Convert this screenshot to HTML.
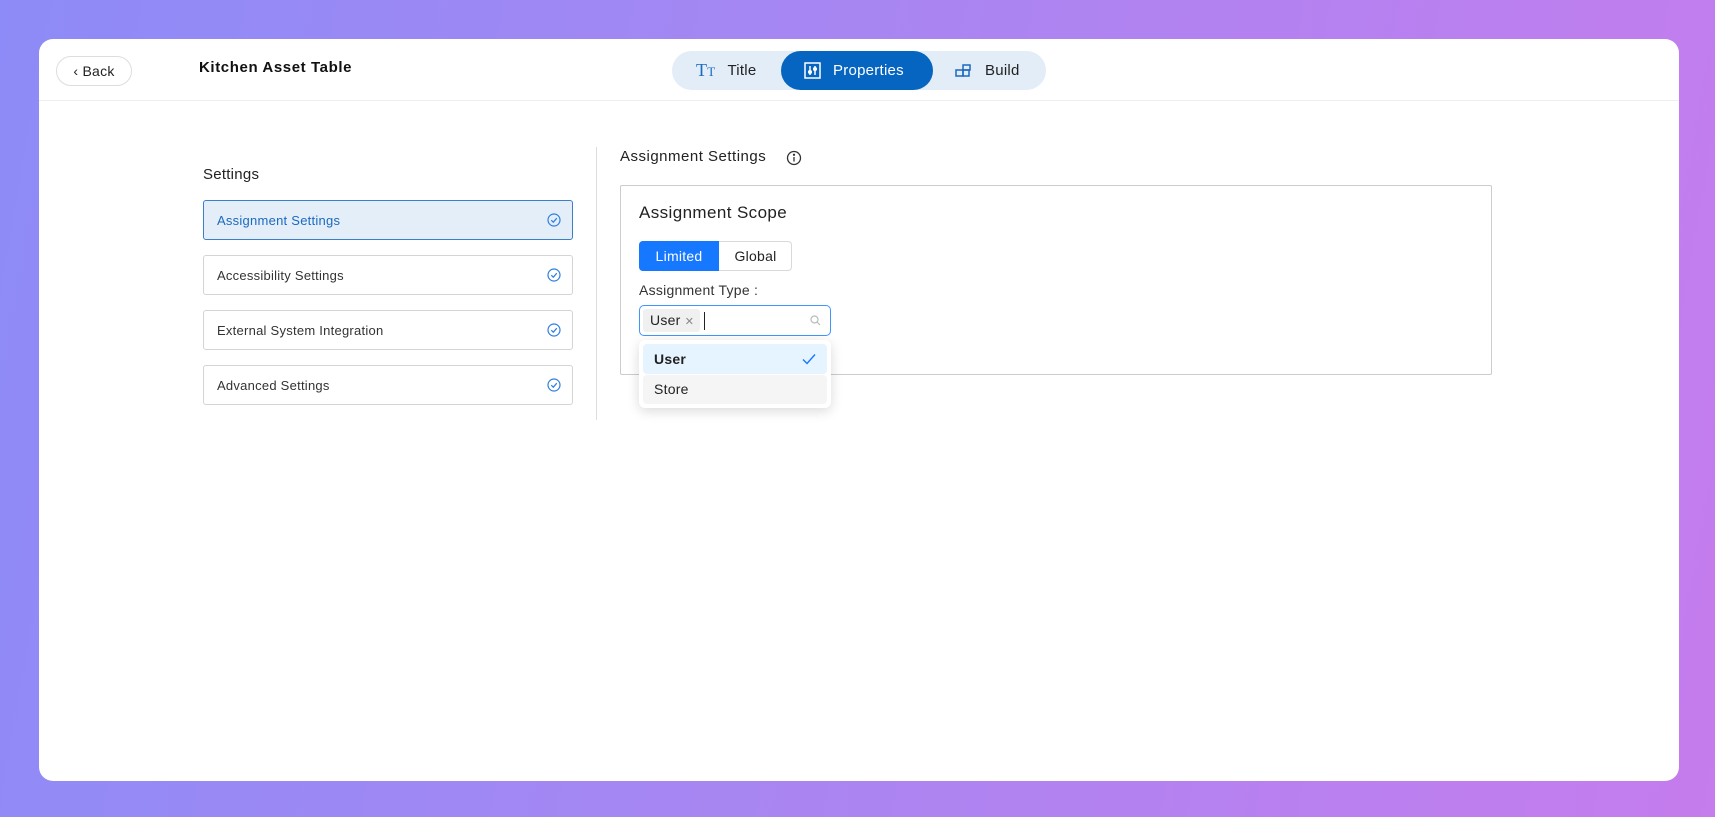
<!DOCTYPE html>
<html><head><style>
*{box-sizing:border-box;margin:0;padding:0}
body{width:1715px;height:817px;overflow:hidden;background:linear-gradient(100deg,#8d8bf7 0%,#a487f3 40%,#c57ced 100%);font-family:"Liberation Sans",sans-serif;color:#222;position:relative;letter-spacing:.25px}
.card{position:absolute;left:39px;top:39px;width:1640px;height:742px;background:#fff;border-radius:14px}
.abs{position:absolute}
.back{left:17px;top:17px;width:76px;height:30px;border:1px solid #ddd;border-radius:15px;font-size:14px;display:flex;align-items:center;justify-content:center;color:#222}
.hdr{left:0;top:61px;width:100%;height:1px;background:#eee}
.tabs{left:633px;top:12px;width:374px;height:39px;background:#e3edf8;border-radius:20px}
.tab{position:absolute;top:0;height:39px;display:flex;align-items:center;font-size:15px;gap:12px}
.item{position:absolute;left:164px;width:370px;height:40px;border:1px solid #d4d4d4;border-radius:3px;font-size:13px;display:flex;align-items:center;padding-left:13px;color:#333}
.item svg{position:absolute;right:11px;top:12px}
</style></head><body>
<div class="card">
<div class="abs back">‹ Back</div>
<div class="abs" style="left:160px;top:20px;font-size:15px;font-weight:bold;color:#111;letter-spacing:.6px">Kitchen Asset Table</div>
<div class="abs tabs">
 <div class="tab" style="left:24px;color:#222"><span style="color:#1a6ac0;font-family:'Liberation Serif',serif;font-size:18px">T<span style="font-size:13px">T</span></span>Title</div>
 <div class="tab" style="left:109px;width:152px;background:#0565c0;border-radius:20px;color:#fff;padding-left:23px">
  <svg width="17" height="17" viewBox="0 0 17 17" fill="none" stroke="#fff" stroke-width="1.5"><rect x="1" y="1" width="15" height="15"/><path d="M6 4v9M11 4v9"/><circle cx="6" cy="10" r="1.3" fill="#fff"/><circle cx="11" cy="7" r="1.3" fill="#fff"/></svg>Properties</div>
 <div class="tab" style="left:283px;color:#222"><svg width="18" height="14" viewBox="0 0 18 14" fill="none" stroke="#1a6ac0" stroke-width="1.5"><rect x="1" y="6" width="7" height="6"/><rect x="8" y="6" width="6" height="6"/><rect x="8" y="1" width="7" height="5"/></svg>Build</div>
</div>
<div class="abs hdr"></div>
<div class="abs" style="left:164px;top:127px;font-size:15px;color:#222">Settings</div>
<div class="item" style="top:161px;background:#e4eef8;border-color:#3a7fc8;color:#1a6ac0">Assignment Settings<svg width="14" height="14" viewBox="0 0 14 14" fill="none" stroke="#2e7fe0" stroke-width="1.2"><circle cx="7" cy="7" r="6"/><path d="M4.3 7.2l2 2 3.5-4"/></svg></div>
<div class="item" style="top:216px">Accessibility Settings<svg width="14" height="14" viewBox="0 0 14 14" fill="none" stroke="#2e7fe0" stroke-width="1.2"><circle cx="7" cy="7" r="6"/><path d="M4.3 7.2l2 2 3.5-4"/></svg></div>
<div class="item" style="top:271px">External System Integration<svg width="14" height="14" viewBox="0 0 14 14" fill="none" stroke="#2e7fe0" stroke-width="1.2"><circle cx="7" cy="7" r="6"/><path d="M4.3 7.2l2 2 3.5-4"/></svg></div>
<div class="item" style="top:326px">Advanced Settings<svg width="14" height="14" viewBox="0 0 14 14" fill="none" stroke="#2e7fe0" stroke-width="1.2"><circle cx="7" cy="7" r="6"/><path d="M4.3 7.2l2 2 3.5-4"/></svg></div>
<div class="abs" style="left:557px;top:108px;width:1px;height:273px;background:#ddd"></div>
<div class="abs" style="left:581px;top:109px;font-size:15px;color:#222;letter-spacing:.5px">Assignment Settings</div>
<svg class="abs" style="left:747px;top:111px" width="16" height="16" viewBox="0 0 16 16" fill="none" stroke="#333" stroke-width="1.3"><circle cx="8" cy="8" r="6.5"/><path d="M8 7v4.5"/><circle cx="8" cy="4.8" r=".5" fill="#333"/></svg>
<div class="abs" style="left:581px;top:146px;width:872px;height:190px;border:1px solid #ccc;border-radius:2px"></div>
<div class="abs" style="left:600px;top:164px;font-size:17px;color:#222;letter-spacing:.4px">Assignment Scope</div>
<div class="abs" style="left:600px;top:202px;width:153px;height:30px;border:1px solid #d9d9d9;border-radius:4px;font-size:14px">
 <div class="abs" style="left:-1px;top:-1px;width:80px;height:30px;background:#1677ff;color:#fff;border-radius:4px 0 0 4px;display:flex;align-items:center;justify-content:center">Limited</div>
 <div class="abs" style="left:79px;top:0;width:73px;height:28px;display:flex;align-items:center;justify-content:center;color:#222">Global</div>
</div>
<div class="abs" style="left:600px;top:243px;font-size:14px;color:#333">Assignment Type :</div>
<div class="abs" style="left:600px;top:266px;width:192px;height:31px;border:1px solid #4096ff;border-radius:5px">
 <div class="abs" style="left:3px;top:3px;width:57px;height:23px;background:#f0f0f0;border-radius:3px;font-size:14px;padding:3px 0 0 7px;color:#222">User <span style="font-size:11px;color:#888">✕</span></div>
 <div class="abs" style="left:64px;top:6px;width:1px;height:18px;background:#222"></div>
 <svg class="abs" style="left:170px;top:9px" width="11" height="11" viewBox="0 0 11 11" fill="none" stroke="#bbb" stroke-width="1.2"><circle cx="4.5" cy="4.5" r="3.5"/><path d="M7 7l3 3"/></svg>
</div>
<div class="abs" style="left:600px;top:301px;width:192px;height:68px;background:#fff;border-radius:6px;box-shadow:0 3px 12px rgba(0,0,0,.15)">
 <div class="abs" style="left:4px;top:4px;width:184px;height:30px;background:#e6f4ff;border-radius:4px;font-size:14px;font-weight:bold;padding:7px 0 0 11px;color:#222">User<svg style="position:absolute;right:11px;top:9px" width="14" height="12" viewBox="0 0 14 12" fill="none" stroke="#1677ff" stroke-width="1.4"><path d="M1 6.5l4 4L13 1.5"/></svg></div>
 <div class="abs" style="left:4px;top:35px;width:184px;height:29px;background:#f5f5f5;border-radius:4px;font-size:14px;padding:6px 0 0 11px;color:#222">Store</div>
</div>
</div>
</body></html>
